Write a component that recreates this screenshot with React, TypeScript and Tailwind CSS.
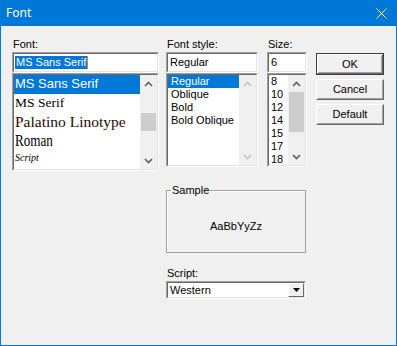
import React from "react";

const sans = { fontFamily: '"Liberation Sans", Arial, sans-serif' };
const serif = { fontFamily: '"Liberation Serif", "Times New Roman", serif' };

function Chevron({ up, disabled }: { up?: boolean; disabled?: boolean }) {
  return (
    <svg width="9" height="6" viewBox="0 0 9 6">
      <path
        d={up ? "M1 5 L4.5 1.5 L8 5" : "M1 1 L4.5 4.5 L8 1"}
        fill="none"
        stroke={disabled ? "#c4c4c4" : "#606060"}
        strokeWidth="1.7"
      />
    </svg>
  );
}

function ScrollBar({ thumbTop, thumbHeight, disabled }: { thumbTop?: number; thumbHeight?: number; disabled?: boolean }) {
  return (
    <div className="w-[17px] h-full flex flex-col bg-[#f0f0f0]">
      <div className="h-[17px] flex items-center justify-center">
        <Chevron up disabled={disabled} />
      </div>
      <div className="flex-1 flex flex-col">
        {thumbHeight ? (
          <div className="mx-px bg-[#cdcdcd]" style={{ marginTop: thumbTop, height: thumbHeight }} />
        ) : null}
      </div>
      <div className="h-[17px] flex items-center justify-center">
        <Chevron disabled={disabled} />
      </div>
    </div>
  );
}

function Sunken({ className, children }: { className?: string; children: React.ReactNode }) {
  return (
    <div className={"border border-t-[#a0a0a0] border-l-[#a0a0a0] border-b-white border-r-white " + (className ?? "")}>
      <div className="h-full border border-t-[#696969] border-l-[#696969] border-b-[#e3e3e3] border-r-[#e3e3e3] bg-white flex">
        {children}
      </div>
    </div>
  );
}

function Button({ label, isDefault }: { label: string; isDefault?: boolean }) {
  const inner = (
    <div className="h-full border border-t-white border-l-white border-b-[#696969] border-r-[#696969]">
      <div className="h-full border border-t-[#f0f0f0] border-l-[#f0f0f0] border-b-[#a0a0a0] border-r-[#a0a0a0] bg-[#f0f0f0] flex items-center justify-center text-[11px] leading-[13px] text-black">
        {label}
      </div>
    </div>
  );
  if (isDefault) {
    return <div className="h-[22px] border border-[#3c3c3c]">{inner}</div>;
  }
  return <div className="h-[21px]">{inner}</div>;
}

function Label({ children }: { children: React.ReactNode }) {
  return <div className="h-[13px] leading-[13px] text-[11px] pl-px text-black">{children}</div>;
}

export default function App() {
  const styles = ["Regular", "Oblique", "Bold", "Bold Oblique"];
  const sizes = ["8", "10", "12", "14", "15", "17", "18"];

  return (
    <div className="w-[397px] h-[346px] bg-[#0078d7] px-px pb-px flex flex-col select-none" style={sans}>
      {/* title bar */}
      <div className="h-[26px] flex items-center justify-between pl-[5px] pr-[9px] text-white">
        <span className="text-[12px] leading-[14px]" style={{ fontFamily: '"Noto Sans", "Liberation Sans", sans-serif' }}>
          Font
        </span>
        <svg width="11" height="11" viewBox="0 0 11 11">
          <path d="M0.5 0.5 L10.5 10.5 M10.5 0.5 L0.5 10.5" stroke="white" strokeWidth="1" />
        </svg>
      </div>

      <div className="flex-1 bg-[#f0f0f0] flex items-start pl-[11px] pt-[12px]">
        {/* Font column */}
        <div className="w-[147px] flex flex-col">
          <Label>Font:</Label>
          <Sunken className="mt-px h-[21px]">
            <div className="flex items-center pl-px">
              <span className="bg-[#0078d7] text-white text-[11px] leading-[13px] px-px">MS Sans Serif</span>
              <span className="w-px h-[13px] bg-[#f08000]" />
            </div>
          </Sunken>
          <Sunken className="h-[98px]">
            <div className="flex-1 flex flex-col overflow-hidden text-black">
              <div className="h-[19px] leading-[17px] text-[13px] bg-[#0078d7] text-white pl-px whitespace-nowrap" style={sans}>
                MS Sans Serif
              </div>
              <div className="h-[20px] leading-[17px] text-[13.5px] pl-px whitespace-nowrap" style={serif}>
                MS Serif
              </div>
              <div className="h-[19px] leading-[15px] text-[15.5px] pl-px whitespace-nowrap text-[#1a0d00]" style={serif}>
                Palatino Linotype
              </div>
              <div className="h-[19px] leading-[17px] text-[16px] pl-px whitespace-nowrap" style={serif}>
                <span className="inline-block origin-left scale-x-[0.82]">Roman</span>
              </div>
              <div className="h-[18px] leading-[13px] text-[10px] italic pl-px whitespace-nowrap" style={serif}>
                Script
              </div>
            </div>
            <ScrollBar thumbTop={21} thumbHeight={18} />
          </Sunken>
        </div>

        {/* Style / size / sample / script */}
        <div className="ml-[7px] w-[141px] flex flex-col">
          <div className="flex gap-[9px]">
            <div className="w-[92px] flex flex-col">
              <Label>Font style:</Label>
              <Sunken className="mt-px h-[21px]">
                <div className="flex items-center pl-[2px] text-[11px] leading-[13px] text-black">Regular</div>
              </Sunken>
              <Sunken className="h-[94px]">
                <div className="flex-1 flex flex-col text-[11px] leading-[13px] text-black">
                  {styles.map((s, i) => (
                    <div key={s} className={"h-[13px] pl-[3px] whitespace-nowrap " + (i === 0 ? "bg-[#0078d7] text-white" : "")}>
                      {s}
                    </div>
                  ))}
                </div>
                <ScrollBar disabled />
              </Sunken>
            </div>
            <div className="w-[40px] flex flex-col">
              <Label>Size:</Label>
              <Sunken className="mt-px h-[21px]">
                <div className="flex items-center pl-[2px] text-[11px] leading-[13px] text-black">6</div>
              </Sunken>
              <Sunken className="h-[94px]">
                <div className="flex-1 flex flex-col text-[11px] leading-[13px] text-black">
                  {sizes.map((s) => (
                    <div key={s} className="h-[13px] pl-[2px]">
                      {s}
                    </div>
                  ))}
                </div>
                <ScrollBar thumbTop={0} thumbHeight={40} />
              </Sunken>
            </div>
          </div>

          {/* Sample group */}
          <div className="relative mt-[23px] h-[63px] w-[140px] border border-[#a0a0a0] shadow-[inset_1px_1px_0_#ffffff]">
            <span className="absolute left-[4px] -top-[7px] px-px bg-[#f0f0f0] text-[11px] leading-[13px] text-black">Sample</span>
            <div className="flex justify-center pt-[29px] text-[11px] leading-[13px] text-black">AaBbYyZz</div>
          </div>

          <div className="mt-[14px]">
            <Label>Script:</Label>
          </div>
          <Sunken className="mt-px h-[18px] w-[140px]">
            <div className="flex-1 flex items-center pl-[2px] text-[11px] leading-[14px] text-black">Western</div>
            <div className="w-[16px] h-full border border-t-white border-l-white border-b-[#696969] border-r-[#696969] bg-[#f0f0f0] flex items-center justify-center">
              <svg width="7" height="4" viewBox="0 0 7 4">
                <path d="M0 0 H7 L3.5 4 Z" fill="black" />
              </svg>
            </div>
          </Sunken>
        </div>

        {/* Buttons */}
        <div className="ml-[9px] w-[68px] flex flex-col pt-[15px] gap-[4px]">
          <Button label="OK" isDefault />
          <Button label="Cancel" />
          <Button label="Default" />
        </div>
      </div>
    </div>
  );
}
